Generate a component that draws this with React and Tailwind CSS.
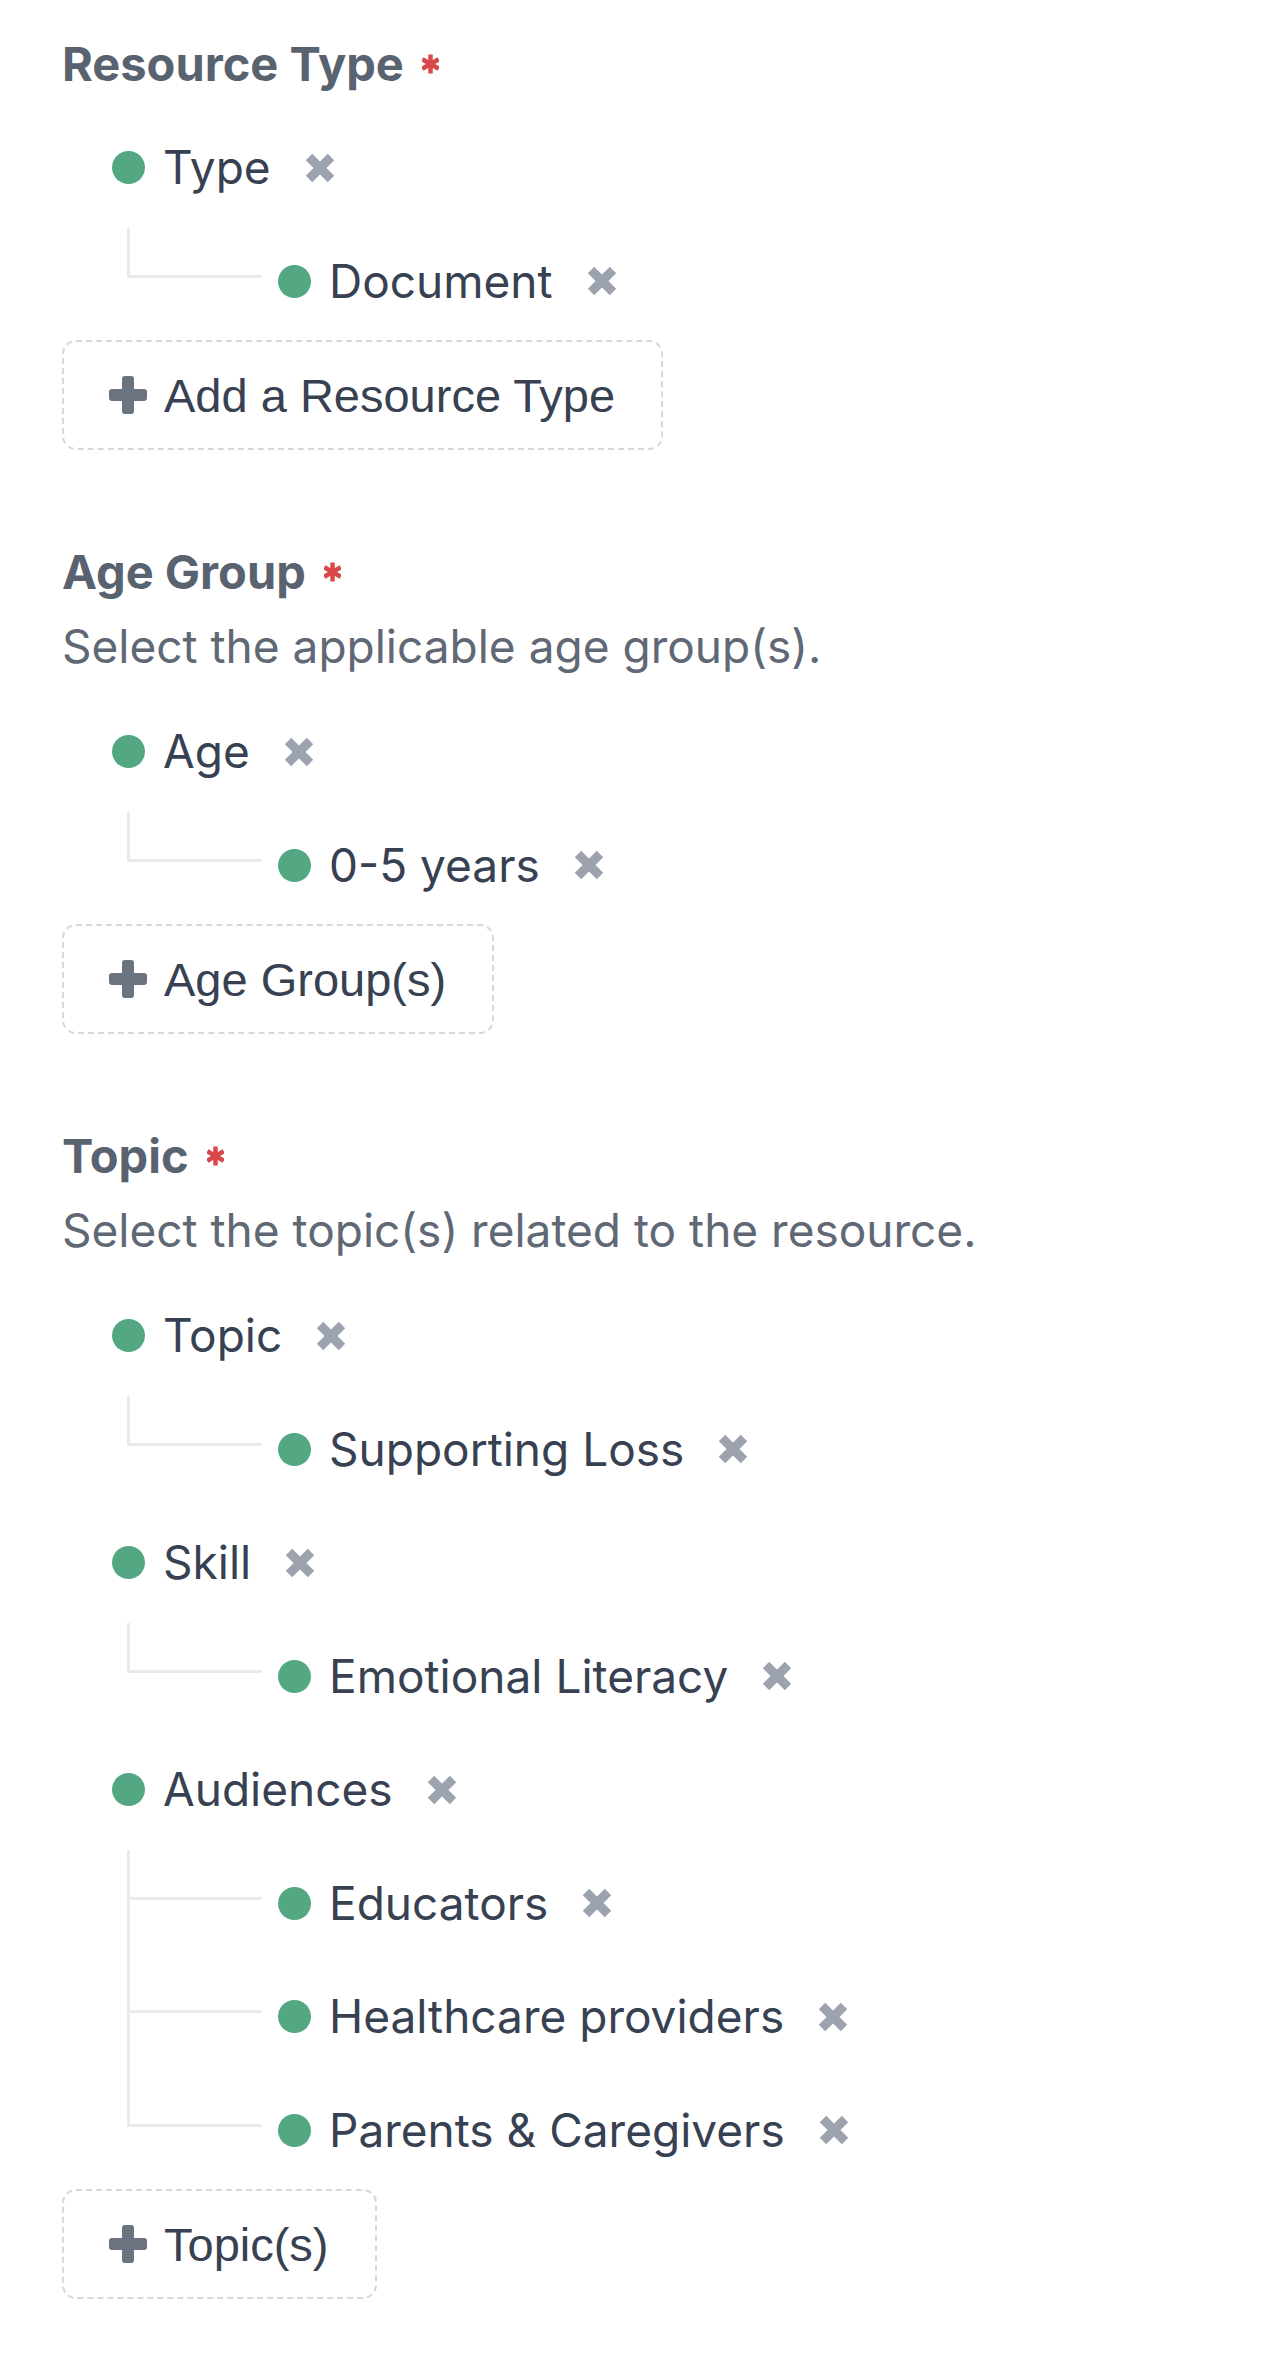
import React from "react";

const sections = [
  {
    title: "Resource Type",
    button: "Add a Resource Type",
    groups: [{ label: "Type", children: ["Document"] }],
  },
  {
    title: "Age Group",
    description: "Select the applicable age group(s).",
    button: "Age Group(s)",
    groups: [{ label: "Age", children: ["0-5 years"] }],
  },
  {
    title: "Topic",
    description: "Select the topic(s) related to the resource.",
    button: "Topic(s)",
    groups: [
      { label: "Topic", children: ["Supporting Loss"] },
      { label: "Skill", children: ["Emotional Literacy"] },
      {
        label: "Audiences",
        children: ["Educators", "Healthcare providers", "Parents & Caregivers"],
      },
    ],
  },
];

function RemoveIcon() {
  return (
    <svg width="30" height="30" viewBox="0 0 30 30" className="shrink-0">
      <g stroke="#9ca3af" strokeWidth="9" strokeLinecap="butt">
        <line x1="4" y1="4" x2="26" y2="26" />
        <line x1="26" y1="4" x2="4" y2="26" />
      </g>
    </svg>
  );
}

function PlusIcon() {
  return (
    <svg width="38" height="38" viewBox="0 0 38 38" className="shrink-0">
      <rect x="0" y="13" width="38" height="12" rx="3" fill="#6b7280" />
      <rect x="13" y="0" width="12" height="38" rx="3" fill="#6b7280" />
    </svg>
  );
}

function RequiredMark() {
  return (
    <svg width="17" height="20" viewBox="0 0 17 20" className="ml-[18px] shrink-0">
      <g stroke="#d9474a" strokeWidth="4.5">
        <line x1="8.5" y1="0.5" x2="8.5" y2="19.5" />
        <line x1="0.3" y1="5.25" x2="16.7" y2="14.75" />
        <line x1="16.7" y1="5.25" x2="0.3" y2="14.75" />
      </g>
    </svg>
  );
}

function Tag({ label }) {
  return (
    <div className="flex items-center">
      <span className="w-[33px] h-[33px] rounded-full bg-[#53a883] shrink-0" />
      <span className="ml-[18px] text-[#374151]">{label}</span>
      <span className="ml-[34px] flex items-center">
        <RemoveIcon />
      </span>
    </div>
  );
}

function ChildRow({ label, first, last }) {
  return (
    <div className="flex h-[113.5px]">
      <div className="ml-[15px] w-[135px] flex flex-col">
        <div
          className={
            first
              ? "mt-[3px] h-[50px] border-l-[3px] border-b-[3px] border-[#e8eaee]"
              : "h-[53px] border-l-[3px] border-b-[3px] border-[#e8eaee]"
          }
        />
        {!last && <div className="flex-1 border-l-[3px] border-[#e8eaee]" />}
      </div>
      <div className="ml-[16px] flex items-center">
        <Tag label={label} />
      </div>
    </div>
  );
}

function Group({ group }) {
  return (
    <div className="flex flex-col">
      <div className="flex items-center h-[113.5px]">
        <Tag label={group.label} />
      </div>
      {group.children.map((child, i) => (
        <ChildRow
          key={child}
          label={child}
          first={i === 0}
          last={i === group.children.length - 1}
        />
      ))}
    </div>
  );
}

function Section({ section, index }) {
  return (
    <section className={index === 0 ? "flex flex-col" : "flex flex-col mt-[94px]"}>
      <h2 className="flex items-center font-bold text-[47px] text-[#59636f] leading-[55px]">
        {section.title}
        <RequiredMark />
      </h2>
      {section.description && (
        <p className="mt-[20px] text-[#5f6874] leading-[55px]">{section.description}</p>
      )}
      <div className={section.description ? "mt-[21px] pl-[50px]" : "mt-[20px] pl-[50px]"}>
        {section.groups.map((g) => (
          <Group key={g.label} group={g} />
        ))}
      </div>
      <button
        type="button"
        className="mt-[2px] self-start h-[110px] flex items-center gap-[17px] pl-[45px] pr-[46px] border-2 border-dashed border-[#d5d9de] rounded-[14px] bg-white text-[#374151] font-['Liberation_Sans',Arial,sans-serif] text-[47px] leading-[55px]"
      >
        <PlusIcon />
        <span>{section.button}</span>
      </button>
    </section>
  );
}

export default function App() {
  return (
    <div className="min-h-[2356px] w-[1280px] bg-white pt-[36px] pl-[62px] font-['Inter',sans-serif] text-[46px]">
      {sections.map((s, i) => (
        <Section key={s.title} section={s} index={i} />
      ))}
    </div>
  );
}
